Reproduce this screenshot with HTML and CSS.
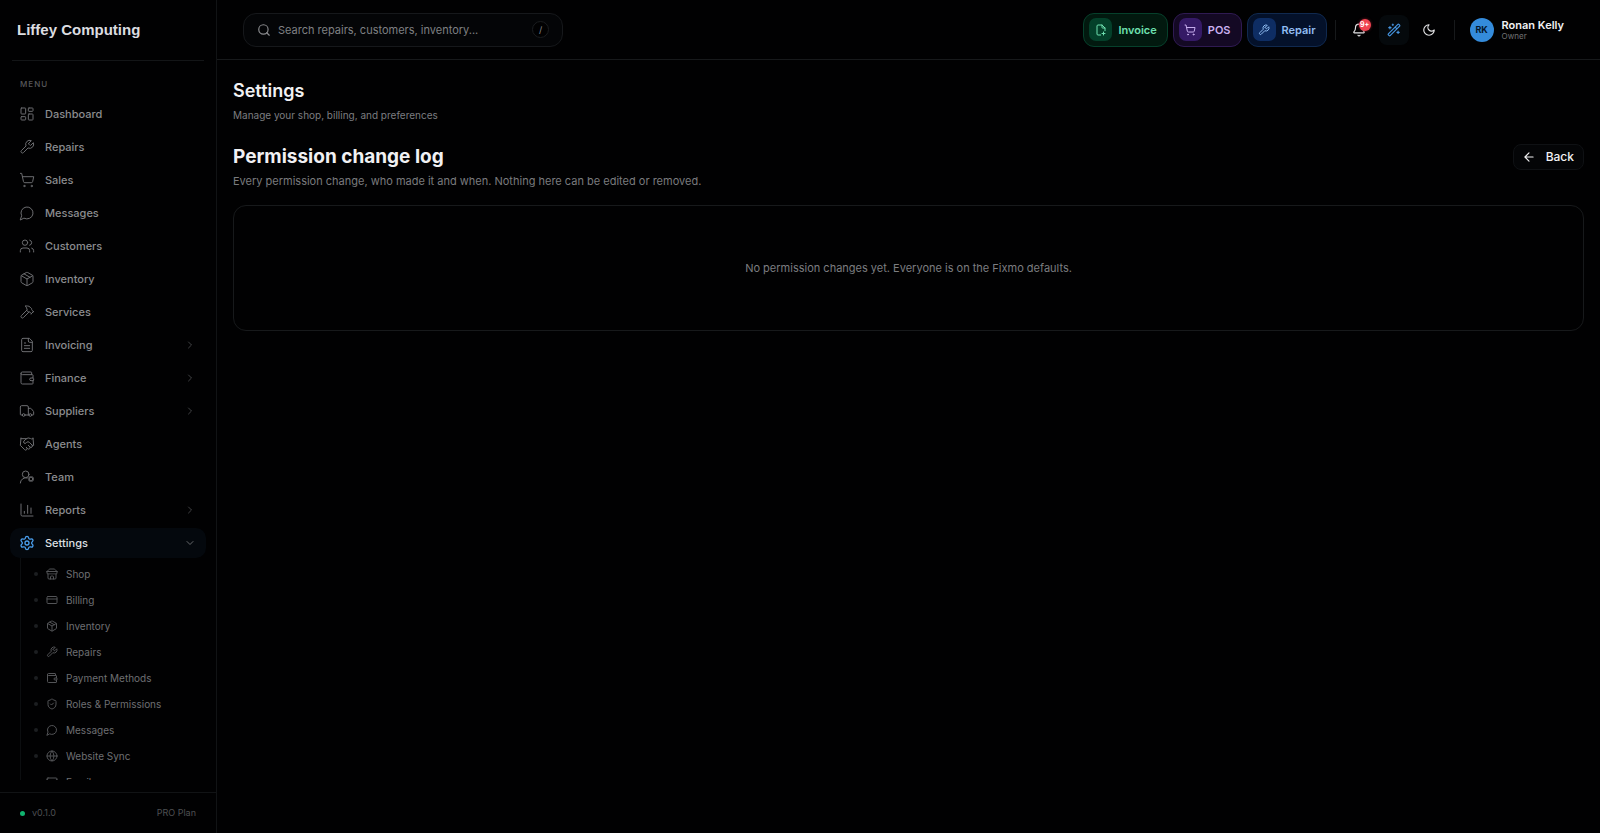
FILE: index.html
```
<!DOCTYPE html>
<html lang="en">
<head>
<meta charset="utf-8">
<meta name="viewport" content="width=device-width, initial-scale=1">
<title>Permission change log</title>
<link rel="stylesheet" href="styles.css">
</head>
<body>
<svg class="sprite" aria-hidden="true">
  <symbol id="dashboard" viewBox="0 0 24 24"><rect x="3" y="3" width="7" height="9" rx="1"/><rect x="14" y="3" width="7" height="5" rx="1"/><rect x="14" y="12" width="7" height="9" rx="1"/><rect x="3" y="16" width="7" height="5" rx="1"/></symbol>
  <symbol id="wrench" viewBox="0 0 24 24"><path d="M14.7 6.3a1 1 0 0 0 0 1.4l1.6 1.6a1 1 0 0 0 1.4 0l3.77-3.77a6 6 0 0 1-7.94 7.94l-6.91 6.91a2.12 2.12 0 0 1-3-3l6.91-6.91a6 6 0 0 1 7.94-7.94l-3.76 3.76z"/></symbol>
  <symbol id="cart" viewBox="0 0 24 24"><circle cx="8" cy="21" r="1"/><circle cx="19" cy="21" r="1"/><path d="M2.05 2.05h2l2.66 12.42a2 2 0 0 0 2 1.58h9.78a2 2 0 0 0 1.95-1.57l1.65-7.43H5.12"/></symbol>
  <symbol id="message" viewBox="0 0 24 24"><path d="M7.9 20A9 9 0 1 0 4 16.1L2 22Z"/></symbol>
  <symbol id="users" viewBox="0 0 24 24"><path d="M16 21v-2a4 4 0 0 0-4-4H6a4 4 0 0 0-4 4v2"/><circle cx="9" cy="7" r="4"/><path d="M22 21v-2a4 4 0 0 0-3-3.87M16 3.13a4 4 0 0 1 0 7.75"/></symbol>
  <symbol id="package" viewBox="0 0 24 24"><path d="M11 21.73a2 2 0 0 0 2 0l7-4A2 2 0 0 0 21 16V8a2 2 0 0 0-1-1.73l-7-4a2 2 0 0 0-2 0l-7 4A2 2 0 0 0 3 8v8a2 2 0 0 0 1 1.73zM12 22V12M3.3 7 12 12l8.7-5M7.5 4.27l9 5.15"/></symbol>
  <symbol id="hammer" viewBox="0 0 24 24"><path d="m15 12-8.373 8.373a1 1 0 1 1-3-3L12 9M18 15l4-4M21.5 11.5l-1.914-1.914A2 2 0 0 1 19 8.172V7l-2.26-2.26a6 6 0 0 0-4.202-1.756L9 2.96l.92.82A6.18 6.18 0 0 1 12 8.4V10l2 2h1.172a2 2 0 0 1 1.414.586L18.5 14.5"/></symbol>
  <symbol id="file" viewBox="0 0 24 24"><path d="M15 2H6a2 2 0 0 0-2 2v16a2 2 0 0 0 2 2h12a2 2 0 0 0 2-2V7ZM14 2v4a2 2 0 0 0 2 2h4M10 9H8M16 13H8M16 17H8"/></symbol>
  <symbol id="wallet" viewBox="0 0 24 24"><path d="M19 7V4a1 1 0 0 0-1-1H5a2 2 0 0 0 0 4h15a1 1 0 0 1 1 1v4h-3a2 2 0 0 0 0 4h3a1 1 0 0 0 1-1v-2a1 1 0 0 0-1-1M3 5v14a2 2 0 0 0 2 2h15a1 1 0 0 0 1-1v-4"/></symbol>
  <symbol id="truck" viewBox="0 0 24 24"><path d="M14 18V6a2 2 0 0 0-2-2H4a2 2 0 0 0-2 2v11a1 1 0 0 0 1 1h2M15 18H9M19 18h2a1 1 0 0 0 1-1v-3.65a1 1 0 0 0-.22-.624l-3.48-4.35A1 1 0 0 0 17.52 8H14"/><circle cx="17" cy="18" r="2"/><circle cx="7" cy="18" r="2"/></symbol>
  <symbol id="handshake" viewBox="0 0 24 24"><path d="m11 17 2 2a1 1 0 1 0 3-3M14 14l2.5 2.5a1 1 0 1 0 3-3l-3.88-3.88a3 3 0 0 0-4.24 0l-.88.88a1 1 0 1 1-3-3l2.81-2.81a5.79 5.79 0 0 1 7.06-.87l.47.28a2 2 0 0 0 1.42.25L21 4M21 3l1 11h-2M3 3 2 14l6.5 6.5a1 1 0 1 0 3-3M3 4h8"/></symbol>
  <symbol id="usercog" viewBox="0 0 24 24"><path d="M2 21a8 8 0 0 1 10.434-7.62M14.305 16.53l.923-.382M15.228 13.852l-.923-.383M16.852 12.228l-.383-.923M16.852 17.772l-.383.924M19.148 12.228l.383-.923M19.53 18.696l-.382-.924M20.772 13.852l.924-.383M20.772 16.148l.924.383"/><circle cx="10" cy="8" r="5"/><circle cx="18" cy="15" r="3"/></symbol>
  <symbol id="chart" viewBox="0 0 24 24"><path d="M3 3v16a2 2 0 0 0 2 2h16M18 17V9M13 17V5M8 17v-3"/></symbol>
  <symbol id="gear" viewBox="0 0 24 24"><path d="M9.671 4.136a2.34 2.34 0 0 1 4.659 0 2.34 2.34 0 0 0 3.319 1.915 2.34 2.34 0 0 1 2.33 4.033 2.34 2.34 0 0 0 0 3.831 2.34 2.34 0 0 1-2.33 4.033 2.34 2.34 0 0 0-3.319 1.915 2.34 2.34 0 0 1-4.659 0 2.34 2.34 0 0 0-3.32-1.915 2.34 2.34 0 0 1-2.33-4.033 2.34 2.34 0 0 0 0-3.831A2.34 2.34 0 0 1 6.35 6.051a2.34 2.34 0 0 0 3.319-1.915"/><circle cx="12" cy="12" r="3"/></symbol>
  <symbol id="store" viewBox="0 0 24 24"><path d="m2 7 4.41-4.41A2 2 0 0 1 7.83 2h8.34a2 2 0 0 1 1.42.59L22 7M4 12v8a2 2 0 0 0 2 2h12a2 2 0 0 0 2-2v-8M15 22v-4a2 2 0 0 0-2-2h-2a2 2 0 0 0-2 2v4M2 7h20M22 7v3a2 2 0 0 1-2 2a2.7 2.7 0 0 1-1.59-.63.7.7 0 0 0-.82 0A2.7 2.7 0 0 1 16 12a2.7 2.7 0 0 1-1.59-.63.7.7 0 0 0-.82 0A2.7 2.7 0 0 1 12 12a2.7 2.7 0 0 1-1.59-.63.7.7 0 0 0-.82 0A2.7 2.7 0 0 1 8 12a2.7 2.7 0 0 1-1.59-.63.7.7 0 0 0-.82 0A2.7 2.7 0 0 1 4 12a2 2 0 0 1-2-2V7"/></symbol>
  <symbol id="card" viewBox="0 0 24 24"><rect x="2" y="5" width="20" height="14" rx="2"/><path d="M2 10h20"/></symbol>
  <symbol id="shield" viewBox="0 0 24 24"><path d="M20 13c0 5-3.5 7.5-7.66 8.95a1 1 0 0 1-.67-.01C7.5 20.5 4 18 4 13V6a1 1 0 0 1 1-1c2 0 4.5-1.2 6.24-2.72a1.17 1.17 0 0 1 1.52 0C14.51 3.81 17 5 19 5a1 1 0 0 1 1 1zM9 12l2 2 4-4"/></symbol>
  <symbol id="globe" viewBox="0 0 24 24"><circle cx="12" cy="12" r="10"/><path d="M12 2a14.5 14.5 0 0 0 0 20 14.5 14.5 0 0 0 0-20M2 12h20"/></symbol>
  <symbol id="mail" viewBox="0 0 24 24"><rect x="2" y="4" width="20" height="16" rx="2"/><path d="m22 7-8.97 5.7a1.94 1.94 0 0 1-2.06 0L2 7"/></symbol>
  <symbol id="right" viewBox="0 0 24 24"><path d="m9 18 6-6-6-6"/></symbol>
  <symbol id="down" viewBox="0 0 24 24"><path d="m6 9 6 6 6-6"/></symbol>
  <symbol id="search" viewBox="0 0 24 24"><circle cx="11" cy="11" r="8"/><path d="m21 21-4.3-4.3"/></symbol>
  <symbol id="fileplus" viewBox="0 0 24 24"><path d="M11.35 22H6a2 2 0 0 1-2-2V4a2 2 0 0 1 2-2h8l6 6v5.35M14 2v5a1 1 0 0 0 1 1h5M14 19h6M17 16v6"/></symbol>
  <symbol id="bell" viewBox="0 0 24 24"><path d="M10.27 21a2 2 0 0 0 3.46 0M3.26 15.33A1 1 0 0 0 4 17h16a1 1 0 0 0 .74-1.67C19.41 13.96 18 12.5 18 8A6 6 0 0 0 6 8c0 4.5-1.41 5.96-2.74 7.33"/></symbol>
  <symbol id="wand" viewBox="0 0 24 24"><path d="m21.64 3.64-1.28-1.28a1.21 1.21 0 0 0-1.72 0L2.36 18.64a1.21 1.21 0 0 0 0 1.72l1.28 1.28a1.2 1.2 0 0 0 1.72 0L21.64 5.36a1.2 1.2 0 0 0 0-1.72M14 7l3 3M5 6v4M19 14v4M10 2v2M7 8H3M21 16h-4M11 3H9"/></symbol>
  <symbol id="moon" viewBox="0 0 24 24"><path d="M12 3a6 6 0 0 0 9 9 9 9 0 1 1-9-9Z"/></symbol>
  <symbol id="back" viewBox="0 0 24 24"><path d="m12 19-7-7 7-7M19 12H5"/></symbol>
</svg>

<div class="app">
  <aside class="sidebar">
    <div class="brand">Liffey Computing</div>
    <nav class="nav" aria-label="Main">
      <h2 class="nav-title">MENU</h2>
      <ul class="menu">
        <li><a class="item" href="#"><svg class="icon"><use href="#dashboard"/></svg>Dashboard</a></li>
        <li><a class="item" href="#"><svg class="icon"><use href="#wrench"/></svg>Repairs</a></li>
        <li><a class="item" href="#"><svg class="icon"><use href="#cart"/></svg>Sales</a></li>
        <li><a class="item" href="#"><svg class="icon"><use href="#message"/></svg>Messages</a></li>
        <li><a class="item" href="#"><svg class="icon"><use href="#users"/></svg>Customers</a></li>
        <li><a class="item" href="#"><svg class="icon"><use href="#package"/></svg>Inventory</a></li>
        <li><a class="item" href="#"><svg class="icon"><use href="#hammer"/></svg>Services</a></li>
        <li><button class="item" type="button"><svg class="icon"><use href="#file"/></svg>Invoicing<svg class="icon chevron"><use href="#right"/></svg></button></li>
        <li><button class="item" type="button"><svg class="icon"><use href="#wallet"/></svg>Finance<svg class="icon chevron"><use href="#right"/></svg></button></li>
        <li><button class="item" type="button"><svg class="icon"><use href="#truck"/></svg>Suppliers<svg class="icon chevron"><use href="#right"/></svg></button></li>
        <li><a class="item" href="#"><svg class="icon"><use href="#handshake"/></svg>Agents</a></li>
        <li><a class="item" href="#"><svg class="icon"><use href="#usercog"/></svg>Team</a></li>
        <li><button class="item" type="button"><svg class="icon"><use href="#chart"/></svg>Reports<svg class="icon chevron"><use href="#right"/></svg></button></li>
        <li>
          <button class="item active" type="button" aria-expanded="true"><svg class="icon"><use href="#gear"/></svg>Settings<svg class="icon chevron"><use href="#down"/></svg></button>
          <ul class="submenu">
            <li><a class="subitem" href="#"><svg class="icon"><use href="#store"/></svg>Shop</a></li>
            <li><a class="subitem" href="#"><svg class="icon"><use href="#card"/></svg>Billing</a></li>
            <li><a class="subitem" href="#"><svg class="icon"><use href="#package"/></svg>Inventory</a></li>
            <li><a class="subitem" href="#"><svg class="icon"><use href="#wrench"/></svg>Repairs</a></li>
            <li><a class="subitem" href="#"><svg class="icon"><use href="#wallet"/></svg>Payment Methods</a></li>
            <li><a class="subitem" href="#"><svg class="icon"><use href="#shield"/></svg>Roles &amp; Permissions</a></li>
            <li><a class="subitem" href="#"><svg class="icon"><use href="#message"/></svg>Messages</a></li>
            <li><a class="subitem" href="#"><svg class="icon"><use href="#globe"/></svg>Website Sync</a></li>
            <li><a class="subitem" href="#"><svg class="icon"><use href="#mail"/></svg>Email</a></li>
          </ul>
        </li>
      </ul>
    </nav>
    <footer class="side-foot"><span class="version">v0.1.0</span><span>PRO Plan</span></footer>
  </aside>

  <div class="page">
    <header class="topbar">
      <label class="search">
        <svg class="icon"><use href="#search"/></svg>
        <input class="search-input" type="search" aria-label="Search" placeholder="Search repairs, customers, inventory...">
        <kbd class="key">/</kbd>
      </label>
      <div class="actions">
        <div class="quick-group">
          <button class="quick green" type="button"><span class="chip"><svg class="icon"><use href="#fileplus"/></svg></span>Invoice</button>
          <button class="quick purple" type="button"><span class="chip"><svg class="icon"><use href="#cart"/></svg></span>POS</button>
          <button class="quick blue" type="button"><span class="chip"><svg class="icon"><use href="#wrench"/></svg></span>Repair</button>
        </div>
        <span class="rule"></span>
        <div class="tools">
          <button class="tool" type="button" aria-label="Notifications"><svg class="icon"><use href="#bell"/></svg><span class="badge">9+</span></button>
          <button class="tool lit" type="button" aria-label="Effects"><svg class="icon"><use href="#wand"/></svg></button>
          <button class="tool" type="button" aria-label="Dark mode"><svg class="icon"><use href="#moon"/></svg></button>
        </div>
        <span class="rule"></span>
        <button class="user" type="button">
          <span class="avatar">RK</span>
          <span class="who"><span class="name">Ronan Kelly</span><span class="role">Owner</span></span>
        </button>
      </div>
    </header>

    <main class="content">
      <h1 class="title">Settings</h1>
      <p class="lead">Manage your shop, billing, and preferences</p>
      <div class="section-head">
        <div>
          <h2 class="section-title">Permission change log</h2>
          <p class="section-text">Every permission change, who made it and when. Nothing here can be edited or removed.</p>
        </div>
        <button class="back" type="button"><svg class="icon"><use href="#back"/></svg>Back</button>
      </div>
      <section class="card">No permission changes yet. Everyone is on the Fixmo defaults.</section>
    </main>
  </div>
</div>
</body>
</html>
```
FILE: styles.css
```
* { box-sizing: border-box; }
body, h1, h2, p, ul { margin: 0; padding: 0; }
ul { list-style: none; }
body { background: #010102; color: #f1f1f3; font-family: Inter, "Liberation Sans", sans-serif; font-size: 11px; line-height: 16px; }
button, input, kbd { font: inherit; color: inherit; }
button { border: 0; background: none; padding: 0; }
a { color: inherit; text-decoration: none; }
.sprite { display: none; }
.icon { width: 14px; height: 14px; flex: none; fill: none; stroke: currentColor; stroke-width: 2; stroke-linecap: round; stroke-linejoin: round; }

.app { display: flex; height: 100vh; }

.sidebar { width: 217px; flex: none; display: flex; flex-direction: column; border-right: 1px solid #111315; }
.brand { margin: 0 12px; height: 61px; flex: none; display: flex; align-items: center; padding-left: 5px; border-bottom: 1px solid #131517; font-family: "Liberation Sans", sans-serif; font-size: 15px; font-weight: 700; color: #dcdde0; }
.nav { flex: 1; min-height: 0; overflow: hidden auto; scrollbar-width: none; padding: 15px 10px 0; margin-bottom: 12px; }
.nav-title { padding-left: 10px; font-size: 8px; line-height: 16px; font-weight: 500; letter-spacing: 1px; color: #58595c; }
.menu { display: grid; gap: 3px; padding-top: 7px; }
.item { display: flex; align-items: center; gap: 10px; width: 100%; height: 30px; padding: 0 10px 0 9px; border-radius: 10px; font-weight: 500; color: #8b8c8f; text-align: left; }
.item .icon { width: 16px; height: 16px; stroke-width: 1.5; color: #6c6d70; }
.item .chevron { width: 12px; height: 12px; margin-left: auto; color: #55575a; }
.item.active { background: #04080d; color: #dfe0e3; }
.item.active .icon { color: #4a9eec; stroke-width: 2; }
.item.active .chevron { color: #66686b; }
.submenu { margin-left: 10px; padding: 3px 0 0 13px; border-left: 1px solid #0c0e10; }
.subitem { display: flex; align-items: center; height: 26px; gap: 8px; font-size: 10px; color: #6e6f72; }
.subitem::before { content: ""; width: 4px; height: 4px; border-radius: 50%; background: #1c1e21; }
.subitem .icon { width: 12px; height: 12px; stroke-width: 2; color: #535457; }
.side-foot { height: 41px; flex: none; display: flex; align-items: center; justify-content: space-between; padding: 0 20px; border-top: 1px solid #111315; font-size: 9px; color: #4e5053; }
.version { display: flex; align-items: center; gap: 7px; }
.version::before { content: ""; width: 5px; height: 5px; border-radius: 50%; background: #10b36f; }

.page { flex: 1; min-width: 0; }
.topbar { height: 60px; display: flex; align-items: center; justify-content: space-between; padding: 0 36px 0 26px; border-bottom: 1px solid #17191b; }
.search { width: 320px; height: 34px; display: flex; align-items: center; gap: 7px; padding: 0 13px; border: 1px solid #16181b; border-radius: 13px; background: #040507; color: #8b8c8f; }
.search-input { flex: 1; min-width: 0; padding: 0; border: 0; outline: 0; background: none; }
.search-input::placeholder { color: #7f8083; opacity: 1; }
.key { width: 17px; height: 17px; border: 1px solid #1a1c1f; border-radius: 50%; background: #010102; font-size: 9px; line-height: 15px; text-align: center; }
.actions { display: flex; align-items: center; }
.quick-group { display: flex; gap: 5px; padding-right: 8px; }
.quick { display: flex; align-items: center; gap: 6px; height: 34px; padding: 0 10px 0 5px; border: 1px solid; border-radius: 11px; font-weight: 600; }
.chip { width: 23px; height: 23px; display: grid; place-items: center; border-radius: 7px; }
.chip .icon { width: 12px; height: 12px; }
.green { color: #6ee0b0; background: #02190f; border-color: #06402b; }
.green .chip { background: #04402a; }
.purple { color: #c9b0f0; background: #140924; border-color: #2f1a52; }
.purple .chip { background: #351a66; }
.blue { color: #90bdf2; background: #04112a; border-color: #10294f; }
.blue .chip { background: #0e2d63; }
.rule { width: 1px; height: 20px; background: #17191b; }
.tools { display: flex; gap: 5px; padding: 0 10px 0 8px; }
.tool { position: relative; width: 30px; height: 30px; display: grid; place-items: center; border-radius: 8px; color: #e4e4e6; }
.lit { background: #05090c; color: #4594e0; }
.badge { position: absolute; top: 4px; right: 3px; width: 12px; height: 12px; border-radius: 50%; background: #f04452; color: #fff; font-size: 7px; line-height: 12px; font-weight: 700; text-align: center; box-shadow: 0 0 3px #7c1c26; }
.user { display: flex; align-items: center; gap: 8px; padding-left: 15px; text-align: left; }
.avatar { width: 24px; height: 24px; border-radius: 50%; background: #348bdb; color: #04152a; font-size: 9px; line-height: 24px; font-weight: 700; text-align: center; }
.who { display: grid; }
.name { line-height: 12px; font-weight: 600; }
.role { font-size: 8px; line-height: 10px; color: #717275; }

.content { padding: 20px 16px 0; }
.title { font-size: 18px; line-height: 22px; font-weight: 600; }
.lead { padding-top: 5px; font-size: 10px; color: #7c7d80; }
.section-head { display: flex; align-items: flex-start; justify-content: space-between; padding: 21px 0 16px; }
.section-title { font-size: 19px; line-height: 26px; font-weight: 700; }
.section-text { padding-top: 3px; color: #7a7b7e; }
.back { display: flex; align-items: center; gap: 10px; height: 26px; padding: 0 9px 0 8px; border: 1px solid #0f1114; border-radius: 8px; background: #040507; font-size: 12px; font-weight: 500; }
.card { display: grid; place-items: center; padding: 54px 16px; border: 1px solid #17191b; border-radius: 13px; color: #7c7d80; }
```
